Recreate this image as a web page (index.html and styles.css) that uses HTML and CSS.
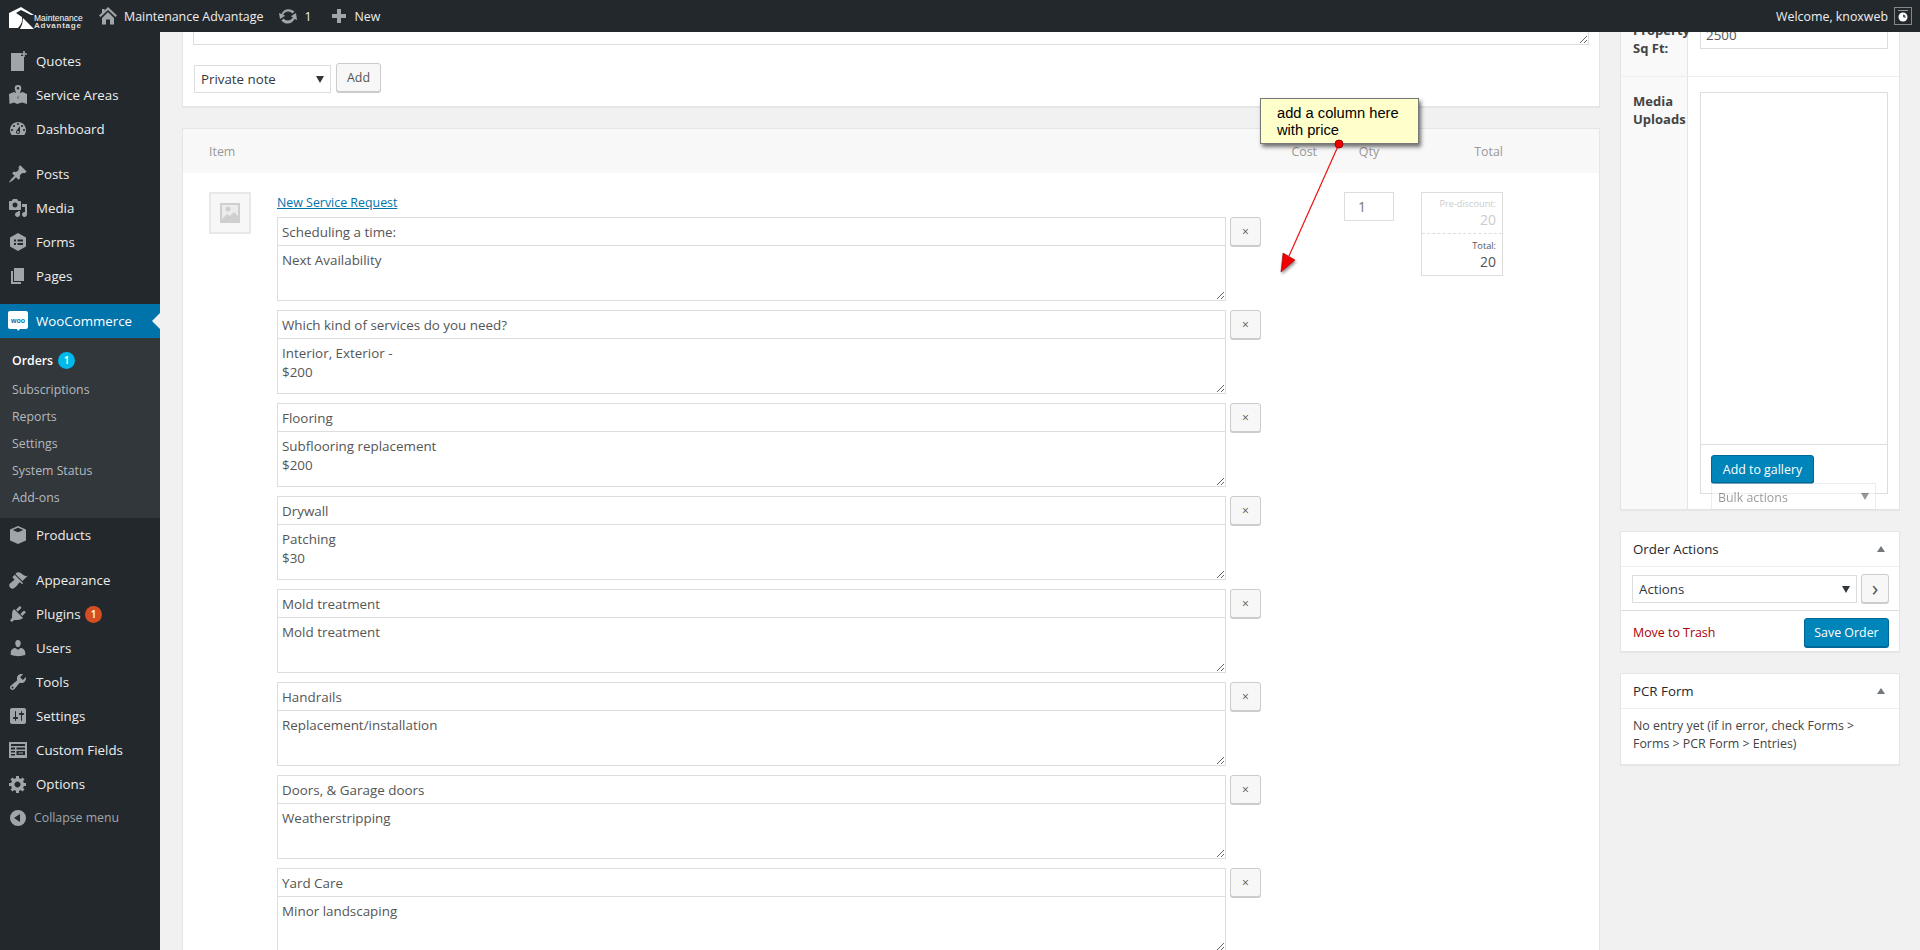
FILE: index.html
```html
<!DOCTYPE html>
<html lang="en">
<head>
<meta charset="utf-8">
<title>Edit Order</title>
<link rel="stylesheet" href="styles.css">
</head>
<body>
<header class="adminbar">
  <div class="logo">
    <svg class="logo-mark" viewBox="0 0 34 24"><path d="M1 7 L13 1 L26 9 L23 9 L13 4 L8 7 L14 11 Q15 17 10 22 L1 22 Z M15 12 L20 17 L26 23 L12 23 Q15 18 15 12 Z" fill="#fff"/></svg>
    <div class="logo-text"><span>Maintenance</span><span class="logo-adv">Advantage</span></div>
  </div>
  <div class="bar-item bar-site">
    <svg class="bar-ico" viewBox="0 0 20 20"><path d="M10 1 L19 9.5 L17.5 11 L10 4 L2.5 11 L1 9.5 L4 6.7 V3 H6.5 V4.4 Z M4 12 L10 6 L16 12 V18.5 H12 V13.5 H8 V18.5 H4 Z"/></svg>
    <span>Maintenance Advantage</span>
  </div>
  <div class="bar-item bar-upd">
    <svg class="bar-ico upd" viewBox="0 0 20 20"><path d="M10.2 3.3c-3 0-5.6 1.9-6.6 4.6L1 6.9 2 13l5.2-3.3-2.1-.9c.8-1.900 2.800-3.300 5.100-3.300 1.700 0 3.200.8 4.200 2l2.200-1.900C15.200 4.500 12.800 3.300 10.200 3.300zM18 7l-5.200 3.300 2.100.9c-.8 1.900-2.800 3.300-5.100 3.300-1.700 0-3.200-.8-4.200-2l-2.200 1.900c1.400 1.900 3.800 3.100 6.400 3.100 3 0 5.600-1.900 6.600-4.600l2.600 1z"/></svg>
    <span>1</span>
  </div>
  <div class="bar-item bar-new">
    <svg class="bar-ico" viewBox="0 0 20 20"><path d="M8 3h4v5h5v4h-5v5H8v-5H3V8h5z"/></svg>
    <span>New</span>
  </div>
  <div class="bar-right">
    <span>Welcome, knoxweb</span>
    <span class="avatar"><svg viewBox="0 0 16 16"><rect x="3" y="2" width="10" height="1" fill="#999"/><circle cx="8" cy="9" r="4.5" fill="#fff"/><path d="M8 9 L8 6.4 A2.6 2.6 0 0 1 10.4 10Z" fill="#555"/></svg></span>
  </div>
</header>

<div class="app">
  <nav class="sidebar">
    <a class="menu-item"><svg class="ico" viewBox="0 0 20 20"><path d="M3 2h10v3h3v15H3zM15.2 0h1.6v2.2H19v1.6h-2.2V6h-1.6V3.8H13V2.2h2.2z"/></svg><span>Quotes</span></a>
    <a class="menu-item"><svg class="ico" viewBox="0 0 20 20"><path d="M1 9l5-2 3 1.5 1 6 1-6L14.500 7l4.500 2v10l-5-1.500-5 1.500-3-1.500-4.500 1.500zM10 0a3.300 3.300 0 0 1 3.300 3.300C13.300 5.500 10 12 10 12S6.700 5.500 6.700 3.300A3.300 3.300 0 0 1 10 0zm0 2a1.300 1.300 0 1 0 0 2.600A1.300 1.300 0 0 0 10 2z"/></svg><span>Service Areas</span></a>
    <a class="menu-item"><svg class="ico" viewBox="0 0 20 20"><path d="M3.76 16h12.48c1.1-1.37 1.76-3.11 1.76-5 0-4.42-3.58-8-8-8s-8 3.58-8 8c0 1.89.66 3.63 1.76 5zM10 4c.55 0 1 .45 1 1s-.45 1-1 1-1-.45-1-1 .45-1 1-1zM6 6c.55 0 1 .45 1 1s-.45 1-1 1-1-.45-1-1 .45-1 1-1zm8 0c.55 0 1 .45 1 1s-.45 1-1 1-1-.45-1-1 .45-1 1-1zm-5.37 5.55L12 7v6c0 1.1-.9 2-2 2s-2-.9-2-2c0-.57.24-1.08.63-1.45zM4 10c.55 0 1 .45 1 1s-.45 1-1 1-1-.45-1-1 .45-1 1-1zm12 0c.55 0 1 .45 1 1s-.45 1-1 1-1-.45-1-1 .45-1 1-1zm-5 3c0-.55-.45-1-1-1s-1 .45-1 1 .45 1 1 1 1-.45 1-1z"/></svg><span>Dashboard</span></a>
    <div class="menu-sep"></div>
    <a class="menu-item"><svg class="ico" viewBox="0 0 20 20"><path d="M10.44 3.02l1.82-1.82 6.36 6.35-1.83 1.82c-1.05-.68-2.48-.57-3.41.36l-.75.75c-.92.93-1.04 2.35-.35 3.41l-1.83 1.82-2.41-2.41-2.8 2.79c-.42.42-3.38 2.71-3.8 2.29s1.86-3.39 2.28-3.81l2.79-2.79L4.1 9.36l1.83-1.82c1.05.69 2.48.57 3.4-.36l.75-.75c.93-.92 1.05-2.35.36-3.41z"/></svg><span>Posts</span></a>
    <a class="menu-item"><svg class="ico" viewBox="0 0 20 20"><path d="M13 11V4c0-.55-.45-1-1-1h-1.670L9 1H5L3.670 3H2c-.55 0-1 .45-1 1v7c0 .55.45 1 1 1h10c.55 0 1-.45 1-1zM7 4.500c1.380 0 2.500 1.120 2.500 2.500S8.380 9.500 7 9.500 4.500 8.380 4.500 7 5.620 4.500 7 4.500zM14 6h5v10.500c0 1.380-1.120 2.500-2.500 2.500S14 17.880 14 16.500s1.120-2.500 2.500-2.500c.170 0 .340.020.5.050V9h-3V6zm-4 8.050V13h2v3.500c0 1.380-1.120 2.500-2.500 2.500S7 17.880 7 16.500 8.120 14 9.500 14c.170 0 .340.020.5.050z"/></svg><span>Media</span></a>
    <a class="menu-item"><svg class="ico" viewBox="0 0 20 20"><path fill-rule="evenodd" d="M10 1l8 4.500v9L10 19l-8-4.500v-9zM6 7.500v2h2v-2zm3.500 0v2H15v-2zM6 11v2h2v-2zm3.500 0v2H15v-2z"/></svg><span>Forms</span></a>
    <a class="menu-item"><svg class="ico" viewBox="0 0 20 20"><path d="M6 15V2h10v13H6zm-1 1h8v2H3V5h2v11z"/></svg><span>Pages</span></a>
    <div class="menu-sep"></div>
    <a class="menu-item active">
      <svg class="ico woo-ico" viewBox="0 0 20 20"><path d="M2 0h16a2 2 0 0 1 2 2v14a2 2 0 0 1-2 2h-6l-2 2-1-2H2a2 2 0 0 1-2-2V2a2 2 0 0 1 2-2z" fill="#fff"/><text x="10" y="11.500" text-anchor="middle" class="woo-text">woo</text></svg>
      <span>WooCommerce</span>
    </a>
    <div class="submenu">
      <a class="sub-item sub-current">Orders <span class="badge badge-blue">1</span></a>
      <a class="sub-item">Subscriptions</a>
      <a class="sub-item">Reports</a>
      <a class="sub-item">Settings</a>
      <a class="sub-item">System Status</a>
      <a class="sub-item">Add-ons</a>
    </div>
    <a class="menu-item"><svg class="ico" viewBox="0 0 20 20"><path d="M10 1l8 3.500v11L10 19l-8-3.500v-11zM10 2.800L4.700 5l5.300 2.300L15.300 5z"/></svg><span>Products</span></a>
    <div class="menu-sep"></div>
    <a class="menu-item"><svg class="ico" viewBox="0 0 20 20"><path d="M14.480 11.060L7.410 3.990l1.500-1.500c.5-.56 2.300-.47 3.510.32 1.210.8 1.430 1.280 2.910 2.100 1.180.64 2.450 1.260 4.450.85zm-.71.71L6.700 4.700 4.930 6.470c-.39.39-.39 1.020 0 1.410l1.060 1.060c.39.39.39 1.030 0 1.420-.6.6-1.430 1.110-2.210 1.690-.35.26-.7.53-1.010.84C1.430 13.230.28 15.800 2.500 18s4.800-.92 6.100-2.100c.31-.31.58-.65.84-1 .58-.78 1.090-1.610 1.690-2.210.39-.39 1.020-.39 1.410 0l1.060 1.060c.39.39 1.020.39 1.410 0z"/></svg><span>Appearance</span></a>
    <a class="menu-item"><svg class="ico" viewBox="0 0 20 20"><path d="M13.110 4.360L9.870 7.600 8 5.730l3.240-3.240c.35-.34 1.050-.2 1.560.32.52.51.66 1.210.31 1.550zm-8 1.770l.91-1.120 9.010 9.010-1.190.84c-.71.71-2.630 1.160-3.820 1.160H6.140L4.900 17.260c-.59.59-1.540.59-2.120 0-.59-.58-.59-1.530 0-2.120l1.240-1.240v-3.880c0-1.130.4-3.190 1.090-3.890zm7.260 3.970l3.240-3.240c.34-.35 1.040-.21 1.550.31.52.51.66 1.210.31 1.550l-3.240 3.250z"/></svg><span>Plugins <span class="badge badge-red">1</span></span></a>
    <a class="menu-item"><svg class="ico" viewBox="0 0 20 20"><path d="M10 9.250c-2.270 0-2.730-3.440-2.730-3.440C7 4.020 7.820 2 9.970 2c2.160 0 2.980 2.020 2.710 3.810 0 0-.41 3.440-2.680 3.440zm0 2.570L12.720 10c2.390 0 4.520 2.330 4.520 4.530v2.490s-3.650 1.130-7.240 1.130c-3.650 0-7.240-1.130-7.240-1.130v-2.490c0-2.250 1.940-4.480 4.470-4.480z"/></svg><span>Users</span></a>
    <a class="menu-item"><svg class="ico" viewBox="0 0 20 20"><path d="M16.680 9.770c-1.340 1.340-3.300 1.670-4.950.99l-5.410 6.520c-.99.99-2.590.99-3.580 0s-.99-2.590 0-3.570l6.520-5.420c-.68-1.650-.35-3.610.99-4.950 1.280-1.280 3.120-1.620 4.720-1.060l-2.890 2.890 2.820 2.820 2.860-2.870c.53 1.580.18 3.390-1.080 4.650zM3.810 16.210c.4.39 1.040.39 1.430 0 .4-.4.4-1.040 0-1.430-.39-.4-1.030-.4-1.430 0-.39.39-.39 1.030 0 1.430z"/></svg><span>Tools</span></a>
    <a class="menu-item"><svg class="ico" viewBox="0 0 20 20"><path d="M18 16V4c0-1.100-.9-2-2-2H4c-1.100 0-2 .9-2 2v12c0 1.100.9 2 2 2h12c1.100 0 2-.9 2-2zM8 11h1c.55 0 1 .45 1 1s-.45 1-1 1H8v1.500c0 .28-.22.5-.5.5s-.5-.22-.5-.5V13H6c-.55 0-1-.45-1-1s.45-1 1-1h1V5.500c0-.28.22-.5.5-.5s.5.22.5.5V11zm5-2h-1c-.55 0-1-.45-1-1s.45-1 1-1h1V5.500c0-.28.22-.5.5-.5s.5.22.5.5V7h1c.55 0 1 .45 1 1s-.45 1-1 1h-1v5.500c0 .28-.22.5-.5.5s-.5-.22-.5-.5V9z"/></svg><span>Settings</span></a>
    <a class="menu-item"><svg class="ico" viewBox="0 0 20 20"><path fill-rule="evenodd" d="M1 2h18v16H1zM3 4v2h14V4zM3 7.500v2h4v-2zm5.500 0v2H17v-2zM3 11v1.500h4V11zm5.500 0v4H17v-4zm2 1.500h4.500v1h-4.500zM3 14v1.500h4V14z"/></svg><span>Custom Fields</span></a>
    <a class="menu-item"><svg class="ico" viewBox="0 0 20 20"><path d="M18 12h-2.180c-.17.7-.44 1.350-.81 1.930l1.540 1.540-2.100 2.100-1.540-1.540c-.58.36-1.230.63-1.910.79V19H8v-2.180c-.68-.16-1.330-.43-1.910-.79l-1.540 1.540-2.120-2.120 1.540-1.540c-.36-.58-.63-1.230-.79-1.910H1V9.030h2.170c.16-.7.44-1.350.8-1.940L2.430 5.550l2.100-2.100 1.540 1.540c.58-.37 1.240-.64 1.930-.81V2h3v2.180c.68.16 1.330.43 1.910.79l1.540-1.540 2.120 2.120-1.540 1.540c.36.59.64 1.240.8 1.940H18V12zm-8.500 1.500c1.660 0 3-1.340 3-3s-1.340-3-3-3-3 1.340-3 3 1.340 3 3 3z"/></svg><span>Options</span></a>
    <a class="menu-item collapse"><svg class="ico" viewBox="0 0 20 20"><path fill-rule="evenodd" d="M10 2a8 8 0 1 1 0 16 8 8 0 0 1 0-16zm2 4l-6 4 6 4z"/></svg><span>Collapse menu</span></a>
  </nav>

  <main class="main">
    <div class="col-left">
      <section class="panel note-panel">
        <textarea class="note-area"></textarea>
        <div class="note-row">
          <select class="select note-select"><option>Private note</option></select>
          <button class="btn">Add</button>
        </div>
      </section>

      <section class="panel items-panel">
        <div class="items-head">
          <span class="head-item">Item</span>
          <span class="head-cost">Cost</span>
          <span class="head-qty">Qty</span>
          <span class="head-total">Total</span>
        </div>
        <div class="item-row">
          <div class="thumb"><svg viewBox="0 0 20 20"><rect width="20" height="20" fill="#cfcfcf"/><rect x="2" y="2" width="16" height="14" fill="#ececec"/><circle cx="8" cy="6" r="2.500" fill="#cfcfcf"/><path d="M2 16l5-5 3 2 4-4 4 4v3z" fill="#cfcfcf"/></svg></div>
          <div class="item-main">
            <a class="item-link">New Service Request</a>
            <div class="field">
              <div class="field-boxes"><input class="field-title" value="Scheduling a time:"><textarea class="field-text">Next Availability</textarea></div>
              <button class="btn btn-x">×</button>
            </div>
            <div class="field">
              <div class="field-boxes"><input class="field-title" value="Which kind of services do you need?"><textarea class="field-text">Interior, Exterior -
$200</textarea></div>
              <button class="btn btn-x">×</button>
            </div>
            <div class="field">
              <div class="field-boxes"><input class="field-title" value="Flooring"><textarea class="field-text">Subflooring replacement
$200</textarea></div>
              <button class="btn btn-x">×</button>
            </div>
            <div class="field">
              <div class="field-boxes"><input class="field-title" value="Drywall"><textarea class="field-text">Patching
$30</textarea></div>
              <button class="btn btn-x">×</button>
            </div>
            <div class="field">
              <div class="field-boxes"><input class="field-title" value="Mold treatment"><textarea class="field-text">Mold treatment</textarea></div>
              <button class="btn btn-x">×</button>
            </div>
            <div class="field">
              <div class="field-boxes"><input class="field-title" value="Handrails"><textarea class="field-text">Replacement/installation</textarea></div>
              <button class="btn btn-x">×</button>
            </div>
            <div class="field">
              <div class="field-boxes"><input class="field-title" value="Doors, &amp; Garage doors"><textarea class="field-text">Weatherstripping</textarea></div>
              <button class="btn btn-x">×</button>
            </div>
            <div class="field">
              <div class="field-boxes"><input class="field-title" value="Yard Care"><textarea class="field-text">Minor landscaping</textarea></div>
              <button class="btn btn-x">×</button>
            </div>
          </div>
          <input class="qty" value="1">
          <div class="totals">
            <div class="tot-pre"><small>Pre-discount:</small><span>20</span></div>
            <div class="tot-final"><small>Total:</small><span>20</span></div>
          </div>
        </div>
      </section>
    </div>

    <aside class="col-right">
      <section class="panel fields-panel">
        <div class="meta-row">
          <div class="meta-label">Property Sq Ft:</div>
          <div class="meta-value meta-sq"><input class="meta-input" value="2500"></div>
        </div>
        <div class="meta-row">
          <div class="meta-label">Media Uploads</div>
          <div class="meta-value meta-media">
            <div class="media-box">
              <div class="media-list"></div>
              <div class="media-foot">
                <button class="btn-primary btn-gallery">Add to gallery</button>
                <select class="select bulk"><option>Bulk actions</option></select>
              </div>
            </div>
          </div>
        </div>
      </section>

      <section class="panel box">
        <h2 class="box-title">Order Actions <i class="tri"></i></h2>
        <div class="action-row">
          <select class="select act-select"><option>Actions</option></select>
          <button class="btn btn-go">›</button>
        </div>
        <div class="save-row">
          <a class="trash">Move to Trash</a>
          <button class="btn-primary btn-save">Save Order</button>
        </div>
      </section>

      <section class="panel box">
        <h2 class="box-title">PCR Form <i class="tri"></i></h2>
        <p class="box-text">No entry yet (if in error, check Forms &gt; Forms &gt; PCR Form &gt; Entries)</p>
      </section>
    </aside>
  </main>
</div>

<div class="callout">add a column here<br>with price</div>
<svg class="callout-arrow" viewBox="0 0 80 140">
  <defs><filter id="arrow-shadow" x="-30%" y="-30%" width="160%" height="160%"><feDropShadow dx="1" dy="2" stdDeviation="1.500" flood-color="#000" flood-opacity=".45"/></filter></defs>
  <line x1="64" y1="6" x2="14" y2="118" stroke="#f01010" stroke-width="1.200"/>
  <path d="M6 134 L8 115 L20 122 Z" fill="#f00000" stroke="#a00000" stroke-width=".6" filter="url(#arrow-shadow)"/>
  <circle cx="64" cy="6" r="4" fill="#f00000" stroke="#a00000" stroke-width="1"/>
</svg>
</body>
</html>
```

FILE: styles.css
```css
* { box-sizing: border-box; }
html, body { margin: 0; height: 950px; overflow: hidden; }
body {
  background: #f1f1f1;
  color: #444;
  font-family: "Open Sans", sans-serif;
  font-size: 12.4px;
}
input, textarea, select, button { font-family: "Open Sans", sans-serif; color: #555; }

/* admin bar */
.adminbar {
  height: 32px;
  background: #23282d;
  color: #eee;
  display: flex;
  align-items: center;
  position: relative;
  z-index: 5;
  font-size: 12.4px;
}
.logo { width: 100px; padding-left: 8px; display: flex; align-items: flex-end; height: 32px; flex: none; }
.logo-mark { width: 34px; height: 24px; margin-bottom: 2px; margin-right: -8px; flex: none; }
.logo-text { display: flex; flex-direction: column; font-family: "Liberation Sans", sans-serif; font-size: 8.500px; line-height: 8px; color: #fff; padding-bottom: 2px; }
.logo-text span { white-space: nowrap; }
.logo-text .logo-adv { letter-spacing: .75px; color: #ddd; font-weight: 700; font-size: 8px; }
.bar-item { display: flex; align-items: center; flex: none; }
.bar-ico { width: 20px; height: 20px; fill: #a0a5aa; flex: none; }
.bar-site { margin-left: -2px; gap: 6px; margin-right: 15px; }
.bar-upd { gap: 6px; margin-right: 17px; }
.bar-new { gap: 6px; }
.bar-right { margin-left: auto; display: flex; align-items: center; gap: 6px; padding-right: 8px; }
.avatar { width: 18px; height: 18px; border: 1px solid #888; display: block; }
.avatar svg { display: block; width: 16px; height: 16px; }

/* shell */
.app { display: flex; height: 918px; overflow: hidden; }

/* sidebar */
.sidebar { width: 160px; flex: none; background: #23282d; padding-top: 12px; display: flex; flex-direction: column; color: #eee; }
.menu-item { height: 34px; display: flex; align-items: center; gap: 8px; padding-left: 8px; position: relative; flex: none; font-size: 13.3px; }
.menu-item > span { padding-bottom: 1px; }
.ico { width: 20px; height: 20px; fill: #a0a5aa; flex: none; }
.menu-sep { height: 11px; flex: none; }
.menu-item.active { background: #0073aa; color: #fff; }
.menu-item.active::after {
  content: "";
  position: absolute;
  right: 0;
  top: 9px;
  border: 8px solid transparent;
  border-right-color: #f1f1f1;
  border-left-width: 0;
}
.woo-text { font: 700 7px "Liberation Sans", sans-serif; fill: #0073aa; }
.submenu { background: #32373c; padding: 7px 0; height: 180px; flex: none; }
.sub-item { display: flex; align-items: center; height: 27px; padding: 1px 0 0 12px; color: #b4b9be; font-size: 12.3px; gap: 5px; }
.sub-current { height: 30px; padding-top: 0; color: #fff; font-weight: 600; }
.badge { display: inline-block; width: 17px; height: 17px; border-radius: 50%; color: #fff; font-size: 10px; font-weight: 600; line-height: 17px; text-align: center; }
.badge-blue { background: #00b9eb; }
.badge-red { background: #d54e21; margin-left: 1px; vertical-align: 1px; }
.collapse { color: #a0a5aa; gap: 6px; font-size: 12.3px; }

/* main */
.main { flex: 1; min-width: 0; display: flex; align-items: flex-start; gap: 20px; padding: 0 20px 0 22px; overflow: hidden; }
.col-left { width: 1418px; flex: none; margin-top: -52px; }
.col-right { width: 280px; flex: none; margin-top: -27px; }
.panel { background: #fff; border: 1px solid #e5e5e5; box-shadow: 0 1px 1px rgba(0,0,0,.04); }

/* note panel */
.note-panel { padding: 11px 10px 13px; margin-bottom: 21px; height: 127px; }
.note-area { display: block; width: 100%; height: 53px; border: 1px solid #ddd; background: #fff; resize: vertical; }
.note-row { display: flex; align-items: flex-start; gap: 5px; margin-top: 18px; }
.select {
  appearance: none;
  height: 28px;
  border: 1px solid #ddd;
  background: #fff url("data:image/svg+xml,%3Csvg xmlns='http://www.w3.org/2000/svg' width='8' height='7'%3E%3Cpath d='M0 0h8L4 7z' fill='%2332373c'/%3E%3C/svg%3E") no-repeat right 6px center;
  color: #32373c;
  font-size: 13.3px;
  padding: 0 16px 0 6px;
  border-radius: 0;
}
.note-select { width: 137px; margin-left: 1px; margin-top: 2px; }
.btn { height: 29px; border: 1px solid #ccc; border-radius: 3px; background: #f7f7f7; box-shadow: 0 1px 0 #ccc; color: #555; font-size: 12.4px; padding: 0 10px 1px; }

/* items */
.items-head { height: 44px; background: #f8f8f8; display: flex; align-items: center; padding-left: 26px; padding-right: 96px; color: #999; font-size: 12.4px; }
.head-item { flex: 1; }
.head-cost { margin-right: 27px; }
.head-qty { width: 50px; text-align: center; margin-right: 27px; }
.head-total { width: 82px; text-align: right; }
.item-row { display: flex; align-items: flex-start; padding: 19px 0 0 26px; }
.thumb { width: 42px; height: 42px; border: 2px solid #e8e8e8; background: #f7f7f7; display: flex; align-items: center; justify-content: center; flex: none; }
.thumb svg { width: 20px; height: 20px; }
.item-main { width: 984px; margin-left: 26px; flex: none; }
.item-link { display: block; height: 25px; color: #0073aa; text-decoration: underline; font-size: 12.4px; line-height: 22px; }
.field { display: flex; align-items: flex-start; gap: 4px; margin-bottom: 9px; }
.field-boxes { width: 949px; flex: none; }
.field-title { display: block; width: 100%; height: 29px; border: 1px solid #ddd; padding: 0 4px; font-size: 13.4px; color: #555; outline: 0; }
.field-text { display: block; width: 100%; height: 56px; margin-top: -1px; border: 1px solid #ddd; padding: 5px 4px; font-size: 13.4px; line-height: 19px; color: #555; resize: vertical; outline: 0; }
.btn-x { width: 31px; padding: 0; font-size: 12px; color: #555; }
.qty { width: 50px; height: 29px; margin-left: 83px; border: 1px solid #ddd; padding: 0 8px 0 13px; font-size: 14px; color: #777; flex: none; outline: 0; }
.totals { width: 82px; margin-left: 27px; border: 1px solid #ddd; flex: none; text-align: right; }
.totals small, .totals span { display: block; }
.totals small { font-size: 9.2px; line-height: 14px; }
.totals span { font-size: 14px; line-height: 18px; }
.tot-pre { height: 41px; border-bottom: 1px dashed #ddd; padding: 4px 6px 0; color: #ccc; }
.tot-final { height: 41px; padding: 5px 6px 0; color: #555; }

/* right side */
.fields-panel { margin-bottom: 21px; }
.meta-row { display: flex; border-bottom: 1px solid #eee; }
.meta-row:last-child { border-bottom: 0; }
.meta-label { width: 67px; flex: none; background: #f9f9f9; border-right: 1px solid #e5e5e5; padding: 15px 4px 19px 12px; font-size: 13px; font-weight: 700; line-height: 18px; color: #444; }
.meta-value { flex: 1; padding: 15px 11px 15px 12px; }
.meta-input { display: block; width: 100%; height: 28px; border: 1px solid #ddd; padding: 0 5px; font-size: 13.4px; color: #555; outline: 0; }
.media-box { height: 402px; border: 1px solid #ddd; display: flex; flex-direction: column; }
.media-list { height: 352px; border-bottom: 1px solid #ddd; flex: none; }
.media-foot { padding: 10px 10px 0; }
.btn-primary { display: block; height: 28px; border: 1px solid #006799; border-radius: 3px; background: #0085ba; box-shadow: 0 1px 0 #006799; color: #fff; font-size: 12.4px; padding: 0 0 1px; }
.btn-gallery { width: 103px; padding: 0; }
.bulk { display: block; width: 165px; height: 27px; opacity: .5; font-size: 12.4px; padding: 2px 16px 0 6px; }
.box { margin-bottom: 21px; }
.box-title { margin: 0; height: 35px; display: flex; align-items: center; justify-content: space-between; padding: 0 14px 0 12px; border-bottom: 1px solid #eee; font-size: 13.3px; font-weight: 500; color: #23282d; }
.tri { width: 0; height: 0; border: 4px solid transparent; border-bottom: 6px solid #72777c; border-top: 0; display: block; }
.action-row { display: flex; align-items: flex-start; justify-content: space-between; padding: 7px 10px 7px 11px; border-bottom: 1px solid #ddd; }
.act-select { width: 225px; margin-top: 1px; }
.btn-go { width: 28px; padding: 0 0 3px; font-size: 22px; line-height: 20px; }
.save-row { display: flex; align-items: center; justify-content: space-between; padding: 7px 10px 4px 12px; }
.trash { color: #a00; text-decoration: none; font-size: 12.4px; }
.btn-save { height: 29px; width: 85px; }
.box-text { margin: 0; padding: 8px 12px 11px; font-size: 12.4px; line-height: 18px; color: #444; }

/* annotation laid over the page */
.callout {
  position: absolute;
  left: 1260px;
  top: 98px;
  width: 159px;
  height: 46px;
  padding: 6px 0 0 16px;
  background: #ffffcc;
  border: 1px solid #777;
  box-shadow: 2px 3px 4px rgba(0,0,0,.55);
  color: #000;
  font: 14.7px/17px "Liberation Sans", sans-serif;
  z-index: 6;
}
.callout-arrow {
  position: absolute;
  left: 1275px;
  top: 138px;
  width: 80px;
  height: 140px;
  z-index: 7;
}
```
